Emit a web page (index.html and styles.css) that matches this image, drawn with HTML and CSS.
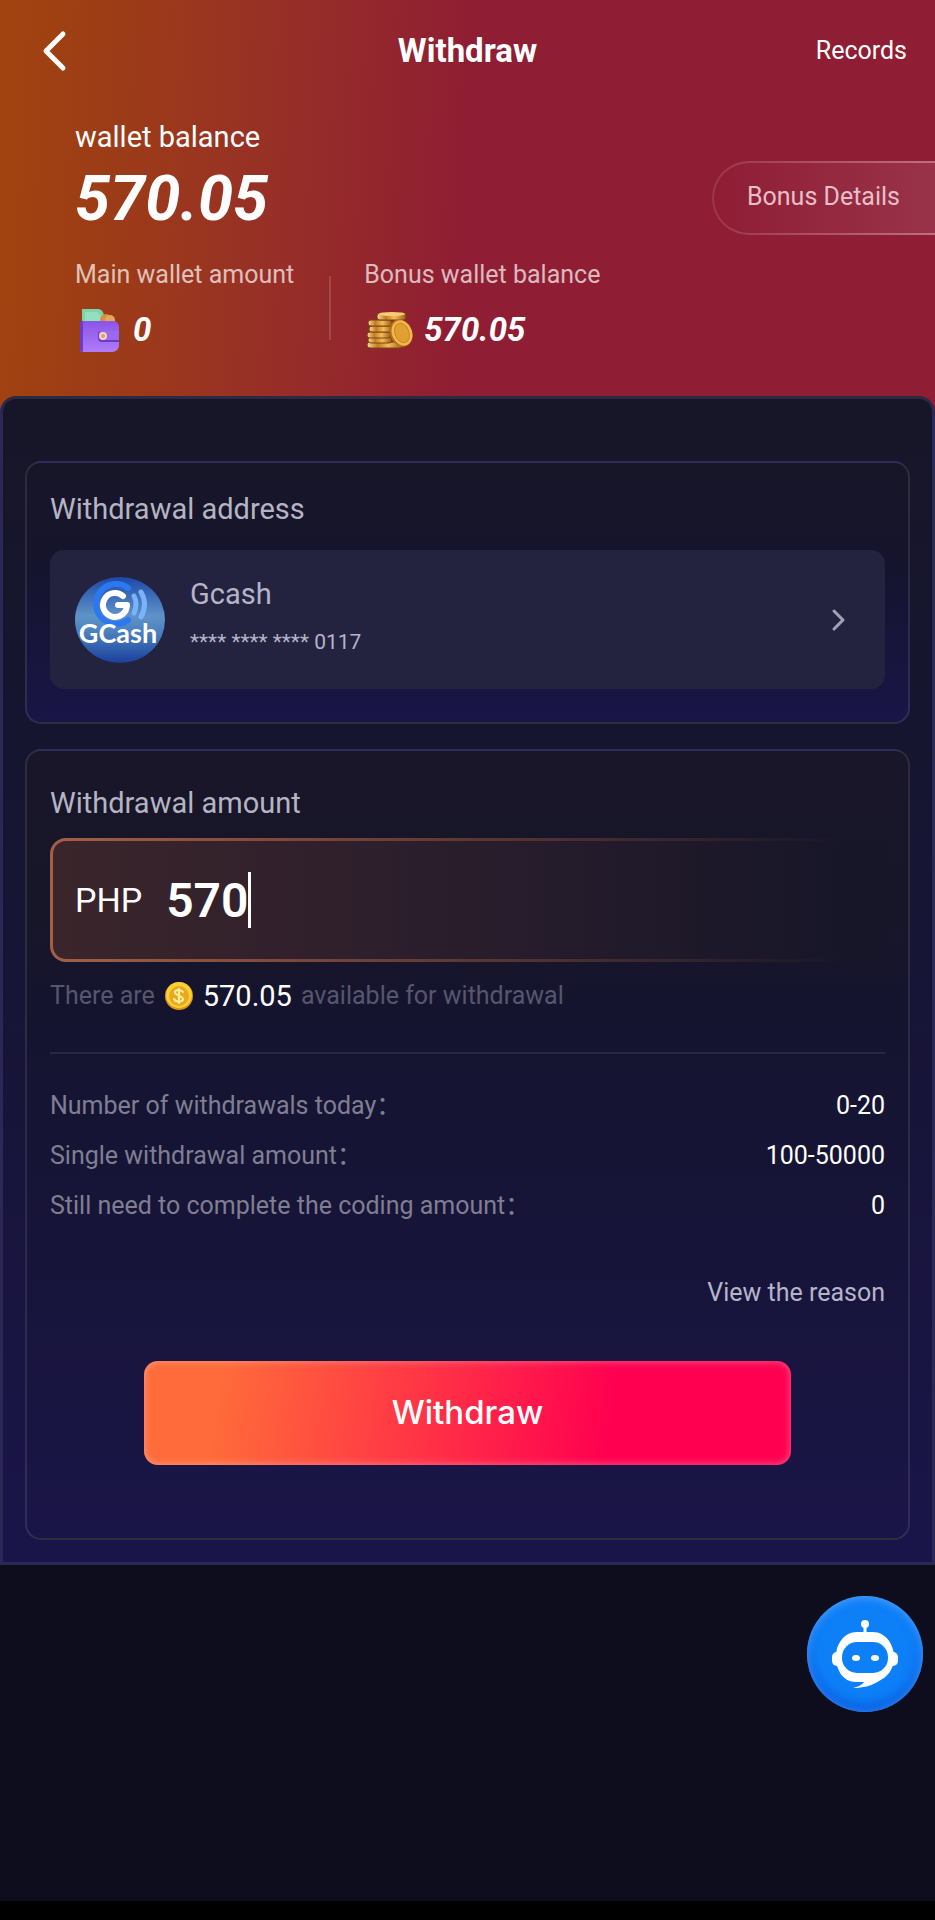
FILE: index.html
```html
<!DOCTYPE html>
<html lang="en">
<head>
  <meta charset="UTF-8">
  <meta name="viewport" content="width=device-width, initial-scale=1.0">
  <title>Withdraw</title>
  <link rel="stylesheet" href="styles.css">
</head>
<body>
  <header class="header">
    <nav class="nav">
      <button class="back" type="button" aria-label="Back">
        <svg width="26" height="42" viewBox="0 0 26 42" fill="none" stroke="#fff" stroke-width="5" stroke-linecap="round" stroke-linejoin="round">
          <path d="M22 4 5 21l17 17"/>
        </svg>
      </button>
      <h1 class="title">Withdraw</h1>
      <a class="records" href="#">Records</a>
    </nav>

    <div class="balance">
      <div class="balance-label">wallet balance</div>
      <div class="balance-total">570.05</div>
      <div class="wallets">
        <div class="wallet">
          <div class="wallet-label">Main wallet amount</div>
          <div class="wallet-value">
            <svg width="48" height="44" viewBox="0 0 48 44">
              <defs>
                <linearGradient id="purse" x1="0" y1="0" x2="0" y2="1">
                  <stop offset="0" stop-color="#8a55e8"/>
                  <stop offset="1" stop-color="#b07cf8"/>
                </linearGradient>
              </defs>
              <path d="M7 1h16c4 0 6 4 6 8v8H7z" fill="#7fd3ab"/>
              <path d="M10 4h12l4 4v7H10z" fill="#93e0bd"/>
              <circle cx="31" cy="12" r="6" fill="#d98f3e"/>
              <circle cx="35" cy="12" r="5" fill="#e6a75a"/>
              <path d="M5 13h33c4 0 6 3 6 7v17c0 4-3 7-7 7H8c-2 0-3-1-3-3z" fill="url(#purse)"/>
              <path d="M5 13h3v31c-2 0-3-1-3-3z" fill="#6b3ccb"/>
              <path d="M25 23h19v11H27c-3 0-4-2-4-5s0-6 2-6z" fill="#6a3bc4"/>
              <path d="M26 23h18v9H28c-3 0-4-2-4-4s0-5 2-5z" fill="#9c68ef"/>
              <circle cx="28" cy="28" r="4" fill="#f5d3c0"/>
              <circle cx="28" cy="28" r="2" fill="#dba06d"/>
            </svg>
            <span>0</span>
          </div>
        </div>
        <div class="wallet">
          <div class="wallet-label">Bonus wallet balance</div>
          <div class="wallet-value">
            <svg width="50" height="44" viewBox="0 0 50 44">
              <defs>
                <linearGradient id="gold" x1="0" y1="0" x2="1" y2="0">
                  <stop offset="0" stop-color="#fbdc92"/>
                  <stop offset="0.3" stop-color="#c17c25"/>
                  <stop offset="0.6" stop-color="#f3bd56"/>
                  <stop offset="1" stop-color="#9a5a14"/>
                </linearGradient>
              </defs>
              <g fill="url(#gold)" stroke="#7c4412">
                <rect x="3" y="34" width="36" height="6" rx="3"/>
                <rect x="4" y="29" width="24" height="6" rx="3"/>
                <rect x="3" y="24" width="24" height="6" rx="3"/>
                <rect x="5" y="18" width="24" height="6" rx="3"/>
                <rect x="4" y="12" width="24" height="6" rx="3"/>
                <rect x="13" y="5" width="29" height="7" rx="3"/>
              </g>
              <ellipse cx="28" cy="6" rx="13" ry="2" fill="#f6cc74"/>
              <ellipse cx="37" cy="25" rx="11" ry="14" transform="rotate(-22 37 25)" fill="#b86f1c"/>
              <ellipse cx="38" cy="25" rx="10" ry="13" transform="rotate(-22 38 25)" fill="#f0b94c"/>
              <ellipse cx="38" cy="25" rx="7" ry="10" transform="rotate(-22 38 25)" fill="#e0a032" stroke="#c98824"/>
            </svg>
            <span>570.05</span>
          </div>
        </div>
      </div>
      <button class="bonus-details" type="button">Bonus Details</button>
    </div>
  </header>

  <main class="panel">
    <section class="card address">
      <h2 class="card-title">Withdrawal address</h2>
      <a class="account" href="#">
        <svg class="account-logo" width="90" height="86" viewBox="0 0 90 86">
          <defs>
            <linearGradient id="gcash" x1="0" y1="0" x2="0" y2="1">
              <stop offset="0" stop-color="#1c48a8"/>
              <stop offset="0.45" stop-color="#5f93c8"/>
              <stop offset="0.65" stop-color="#4a80bd"/>
              <stop offset="1" stop-color="#1a3f9c"/>
            </linearGradient>
          </defs>
          <ellipse cx="45" cy="43" rx="45" ry="43" fill="url(#gcash)"/>
          <path d="M53 11a20 20 0 1 0 0 32" fill="none" stroke="#2c78f0" stroke-width="6" stroke-linecap="round"/>
          <path d="M48 19a12 12 0 1 0 4 9H43" fill="none" stroke="#fff" stroke-width="6" stroke-linecap="round" stroke-linejoin="round"/>
          <path d="M59 19q4 8 0 17M66 15q7 12 0 25" fill="none" stroke="#79b4fb" stroke-width="5" stroke-linecap="round"/>
          <text class="logo-text" x="43" y="66" text-anchor="middle">GCash</text>
        </svg>
        <div class="account-info">
          <div class="account-name">Gcash</div>
          <div class="account-number">**** **** **** 0117</div>
        </div>
        <svg width="16" height="24" viewBox="0 0 16 24" fill="none" stroke="#a3a2b5" stroke-width="3" stroke-linecap="round" stroke-linejoin="round">
          <path d="m3 3 9 9-9 9"/>
        </svg>
      </a>
    </section>

    <section class="card amount">
      <h2 class="card-title">Withdrawal amount</h2>
      <div class="field">
        <label class="currency" for="amount">PHP</label>
        <input class="amount-input" id="amount" type="text" inputmode="numeric" value="570" size="3">
      </div>
      <p class="available">
        <span>There are</span>
        <svg width="30" height="30" viewBox="0 0 30 30">
          <circle cx="15" cy="15" r="14" fill="#dc9417"/>
          <circle cx="15" cy="14" r="13" fill="#fbcf35"/>
          <circle cx="15" cy="15" r="10" fill="#e9aa1e"/>
          <path d="M19 11c-1-2-7-3-8 0s8 4 8 7-7 4-9 0M15 8v14" fill="none" stroke="#fff0a0" stroke-width="2" stroke-linecap="round"/>
        </svg>
        <strong class="available-sum">570.05</strong>
        <span>available for withdrawal</span>
      </p>

      <dl class="limits">
        <div class="limit">
          <dt>Number of withdrawals today：</dt>
          <dd>0-20</dd>
        </div>
        <div class="limit">
          <dt>Single withdrawal amount：</dt>
          <dd>100-50000</dd>
        </div>
        <div class="limit">
          <dt>Still need to complete the coding amount：</dt>
          <dd>0</dd>
        </div>
      </dl>

      <a class="reason" href="#">View the reason</a>
      <button class="submit" type="submit">Withdraw</button>
    </section>
  </main>

  <button class="chat" type="button" aria-label="Support chat">
    <svg width="116" height="116" viewBox="0 0 116 116">
      <path d="M58 31v10" stroke="#fff" stroke-width="3"/>
      <circle cx="58" cy="28" r="4" fill="#fff"/>
      <rect x="25" y="56" width="10" height="14" rx="5" fill="#fff"/>
      <rect x="81" y="56" width="10" height="14" rx="5" fill="#fff"/>
      <path d="M50 36h16c13 0 21 13 21 25 0 13-7 20-15 24-8 5-16 7-26 7 5-1 9-3 11-6h-8c-13 0-20-12-20-25s8-25 21-25z" fill="#fff"/>
      <rect x="35" y="46" width="46" height="31" rx="15" fill="#0d80f8"/>
      <ellipse cx="49" cy="62" rx="4" ry="3" fill="#fff"/>
      <ellipse cx="68" cy="62" rx="4" ry="3" fill="#fff"/>
    </svg>
  </button>
</body>
</html>
```
FILE: styles.css
```css
* {
  box-sizing: border-box;
}
body {
  margin: 0;
  min-height: 100vh;
  border-bottom: 19px solid #000;
  background: #0e0d1d;
  font-family: Roboto, "Noto Sans CJK SC", sans-serif;
  font-size: 25px;
  line-height: 32px;
  color: #fff;
}
h1, h2, p, dl, dd {
  margin: 0;
  font-weight: 400;
}
a {
  color: inherit;
  text-decoration: none;
}
button {
  padding: 0;
  border: none;
  background: none;
  font-family: inherit;
  color: inherit;
  cursor: pointer;
}
svg {
  display: block;
  flex: none;
}

/* header */
.header {
  padding-bottom: 64px;
  background: linear-gradient(93deg, #a1430f 0%, #9c3b18 14%, #972f27 30%, #8f1d33 50%);
}
.nav {
  display: grid;
  grid-template-columns: 1fr auto 1fr;
  align-items: center;
  height: 102px;
  padding: 0 28px;
}
.back {
  justify-self: start;
  margin-left: 13px;
}
.title {
  font-size: 33px;
  font-weight: 700;
}
.records {
  justify-self: end;
}
.balance {
  position: relative;
  padding: 17px 75px 0;
}
.balance-label {
  font-size: 29px;
  line-height: 36px;
}
.balance-total {
  margin-top: 8px;
  font-size: 63px;
  font-weight: 700;
  font-style: italic;
  line-height: 72px;
}
.wallets {
  display: flex;
  margin-top: 24px;
}
.wallet + .wallet {
  position: relative;
  padding-left: 70px;
}
.wallet + .wallet::before {
  content: "";
  position: absolute;
  left: 35px;
  top: 17px;
  bottom: 12px;
  width: 2px;
  background: rgba(255, 255, 255, 0.15);
}
.wallet-label {
  color: rgba(255, 255, 255, 0.7);
}
.wallet-value {
  display: flex;
  align-items: center;
  gap: 10px;
  margin-top: 17px;
  font-size: 33px;
  font-weight: 700;
  font-style: italic;
}
.bonus-details {
  position: absolute;
  right: 0;
  top: 59px;
  height: 74px;
  padding: 0 35px 3px 33px;
  border: 2px solid transparent;
  border-right: none;
  border-radius: 37px 0 0 37px;
  background:
    linear-gradient(90deg, #8f1d34, #983349) padding-box,
    linear-gradient(90deg, #9b364b, #bd7080) border-box;
  font-size: 25px;
  color: #e6bfc8;
}

/* panel */
.panel {
  position: relative;
  display: grid;
  gap: 25px;
  margin-top: -20px;
  padding: 62px 22px 22px;
  border: 3px solid #2b2855;
  border-top-color: #2c2943;
  border-radius: 16px 16px 0 0;
  background: linear-gradient(180deg, #171628 0%, #151530 30%, #171439 60%, #1a1549 100%);
}
.card {
  padding: 28px 23px 33px;
  border: 2px solid rgba(255, 255, 255, 0.1);
  border-radius: 16px;
  background: linear-gradient(180deg, #171628 0%, #15142b 35%, #191547 100%);
}
.card-title {
  font-size: 29px;
  line-height: 36px;
  color: #b5b4c3;
}
.account {
  display: flex;
  align-items: center;
  gap: 25px;
  height: 139px;
  margin-top: 23px;
  padding: 0 38px 0 25px;
  border-radius: 14px;
  background: #232340;
  color: #b5b4c8;
}
.account-info {
  flex: 1;
  padding-bottom: 4px;
}
.account-name {
  font-size: 29px;
}
.account-number {
  margin-top: 16px;
  font-size: 21px;
}
.logo-text {
  font-family: Lato, sans-serif;
  font-size: 27px;
  font-weight: 700;
  fill: #fff;
}

/* amount */
.amount {
  padding-top: 34px;
  padding-bottom: 73px;
  background: linear-gradient(180deg, #181628 0%, #171628 20%, #15142e 32%, #17143a 65%, #1a1547 100%);
}
.field {
  display: flex;
  align-items: center;
  gap: 24px;
  height: 124px;
  margin-top: 17px;
  padding: 0 22px;
  border: 3px solid transparent;
  border-radius: 16px;
  background:
    linear-gradient(90deg, #3b252b, #2b1e2c 45%, #171628 95%) padding-box,
    linear-gradient(90deg, #a56044, #6d3f35 40%, #171628 95%) border-box;
}
.currency {
  font-size: 34px;
}
/* the right border is the text caret */
.amount-input {
  field-sizing: content;
  height: 56px;
  padding: 0;
  border: none;
  border-right: 3px solid #fff;
  outline: none;
  background: none;
  font-family: inherit;
  font-size: 48px;
  font-weight: 600;
  color: #fff;
}
.available {
  display: flex;
  align-items: center;
  gap: 9px;
  height: 42px;
  margin-top: 13px;
  color: #57566c;
}
.available-sum {
  font-size: 29px;
  font-weight: 400;
  color: #fff;
}
.limits {
  margin-top: 35px;
  padding-top: 27px;
  border-top: 2px solid #282741;
}
.limit {
  display: flex;
  justify-content: space-between;
  line-height: 50px;
}
.limit dt {
  color: #7f7e93;
}
.reason {
  display: block;
  width: fit-content;
  margin: 46px 0 0 auto;
  color: #b5b4c8;
}
.submit {
  display: block;
  width: calc(100% - 188px);
  height: 104px;
  margin: 52px auto 0;
  padding-bottom: 2px;
  border-radius: 14px;
  background: linear-gradient(98deg, #ff6b3a 12%, #ff0050 72%);
  box-shadow: inset 0 0 8px rgba(255, 255, 255, 0.35);
  font-family: Inter, sans-serif;
  font-size: 33px;
  font-weight: 500;
}

/* chat */
.chat {
  position: fixed;
  right: 12px;
  bottom: 208px;
  width: 116px;
  height: 116px;
  border-radius: 50%;
  background: #0d80f8;
  box-shadow: inset 0 2px 8px #4da2ff, inset 0 -6px 14px #0b55d8;
}
```
